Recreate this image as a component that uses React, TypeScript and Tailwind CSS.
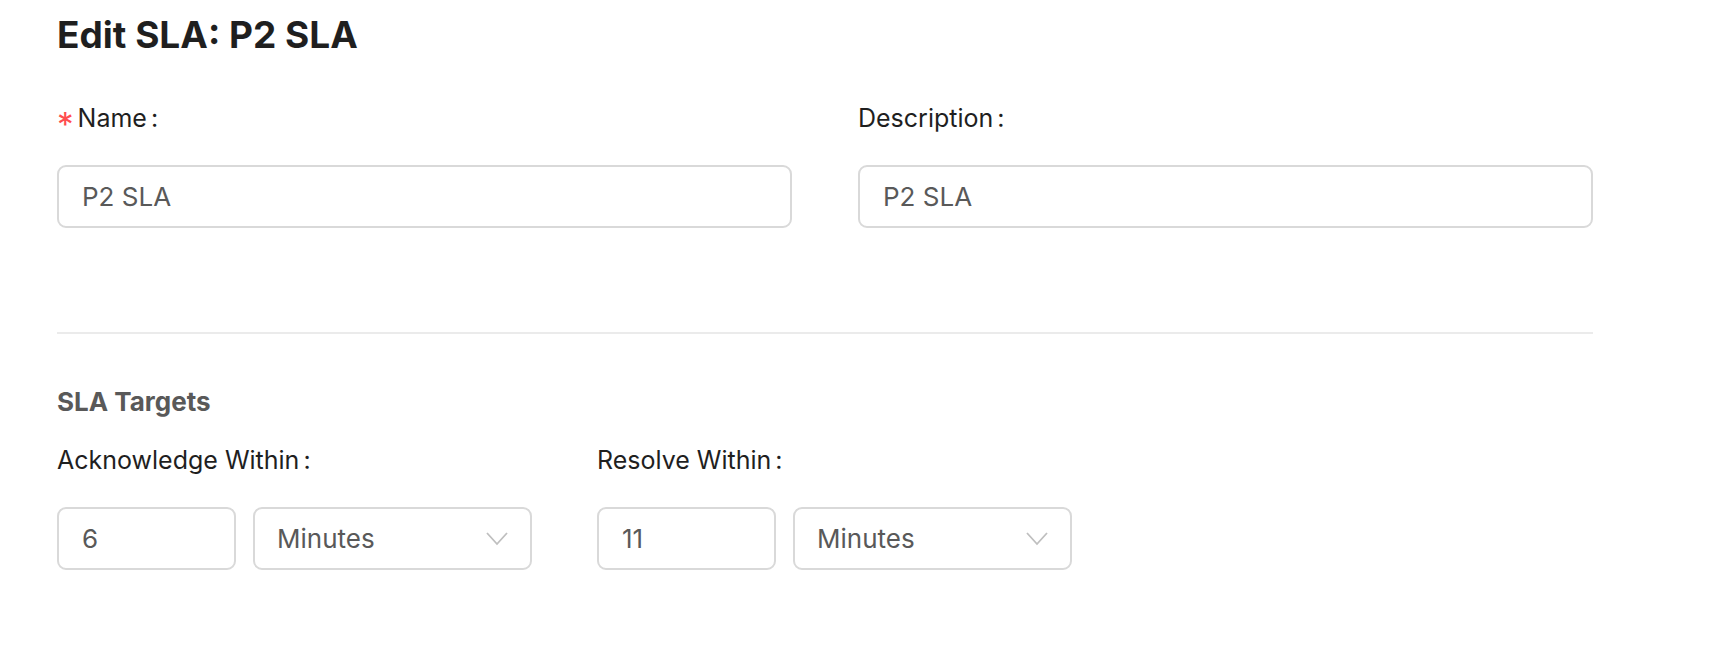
const Chevron = () => (
	<svg width="22" height="14" viewBox="0 0 22 14" fill="none" className="shrink-0">
		<polyline points="1,1 11,12 21,1" stroke="#bfbfbf" strokeWidth="1.8" />
	</svg>
);

const Label = ({ text, required = false }: { text: string; required?: boolean }) => (
	<div className="flex h-[32px] items-center text-[25px] leading-[32px] text-[#1f1f1f]">
		{required ? (
			<span className="mr-[4px] inline-block translate-y-[6px] text-[33px] leading-none text-[#ff4d4f]">*</span>
		) : null}
		<span>{text}</span>
		<span className="ml-[4px]">:</span>
	</div>
);

const TextInput = ({ value, width }: { value: string; width: string }) => (
	<div
		className={`${width} flex h-[63px] items-center rounded-[9px] border-2 border-[#d9d9d9] bg-white px-[23px] text-[26px] text-[#595959]`}
	>
		{value}
	</div>
);

const UnitSelect = ({ value }: { value: string }) => (
	<div className="flex h-[63px] w-[279px] items-center justify-between rounded-[9px] border-2 border-[#d9d9d9] bg-white pl-[22px] pr-[22px] text-[26px] text-[#595959]">
		<span>{value}</span>
		<Chevron />
	</div>
);

const targets = [
	{ label: 'Acknowledge Within', amount: '6', unit: 'Minutes' },
	{ label: 'Resolve Within', amount: '11', unit: 'Minutes' },
];

export default function App() {
	return (
		<div className="min-h-screen bg-white pl-[57px] pt-[13px]" style={{ fontFamily: 'Inter, "Liberation Sans", sans-serif' }}>
			<h1 className="text-[37px] font-bold leading-[44px] text-[#1f1f1f]">Edit SLA: P2 SLA</h1>

			<div className="mt-[45px] flex w-[1536px] gap-[66px]">
				<div className="flex w-[735px] flex-col gap-[31px]">
					<Label text="Name" required />
					<TextInput value="P2 SLA" width="w-[735px]" />
				</div>
				<div className="flex w-[735px] flex-col gap-[31px]">
					<Label text="Description" />
					<TextInput value="P2 SLA" width="w-[735px]" />
				</div>
			</div>

			<div className="mt-[104px] h-[2px] w-[1536px] bg-[#ebebeb]" />

			<h3 className="mt-[52px] text-[26px] font-bold leading-[32px] text-[#595959]">SLA Targets</h3>

			<div className="mt-[26px] flex gap-[65px]">
				{targets.map((target) => (
					<div key={target.label} className="flex w-[475px] flex-col gap-[31px]">
						<Label text={target.label} />
						<div className="flex gap-[17px]">
							<TextInput value={target.amount} width="w-[179px]" />
							<UnitSelect value={target.unit} />
						</div>
					</div>
				))}
			</div>
		</div>
	);
}
